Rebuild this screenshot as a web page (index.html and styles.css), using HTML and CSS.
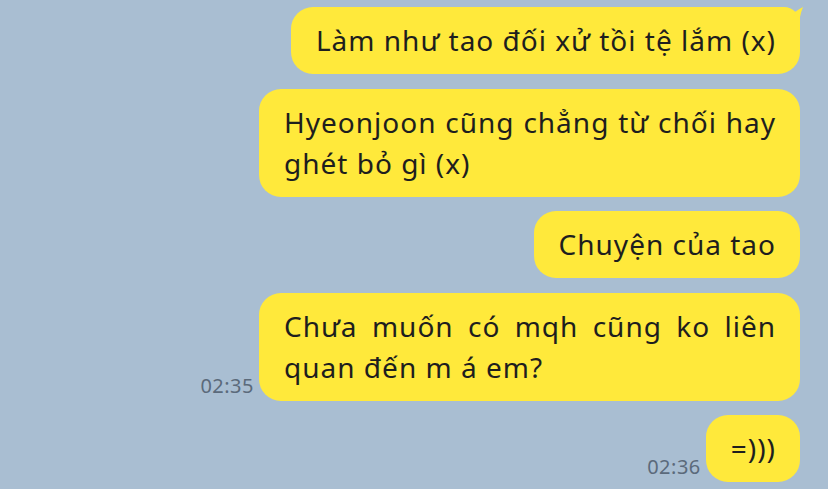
FILE: index.html
```html
<!DOCTYPE html>
<html lang="vi">
<head>
    <meta charset="UTF-8">
    <title>Chat</title>
    <link rel="stylesheet" href="styles.css">
</head>
<body>
    <div class="chat">
        <div class="row">
            <div class="bubble first">
                Làm như tao đối xử tồi tệ lắm (x)
                <svg class="tail" viewBox="0 0 20 20">
                    <path fill="#ffe93b" d="M11 5 Q15 2 19 0 Q17 5 16 10 L16 16 L8 16 Z"/>
                </svg>
            </div>
        </div>
        <div class="row">
            <div class="bubble wide">Hyeonjoon cũng chẳng từ chối hay ghét bỏ gì (x)</div>
        </div>
        <div class="row">
            <div class="bubble">Chuyện của tao</div>
        </div>
        <div class="row">
            <span class="time">02:35</span>
            <div class="bubble wide">Chưa muốn có mqh cũng ko liên quan đến m á em?</div>
        </div>
        <div class="row">
            <span class="time">02:36</span>
            <div class="bubble">=)))</div>
        </div>
    </div>
</body>
</html>
```

FILE: styles.css
```css
* {
    margin: 0;
    padding: 0;
    box-sizing: border-box;
}

body {
    background: #a9bed2;
    font-family: "Noto Sans", "Liberation Sans", sans-serif;
    width: 828px;
    height: 489px;
    overflow: hidden;
}

.chat {
    display: flex;
    flex-direction: column;
    gap: 14.5px;
    padding: 7px 28px 0 0;
}

.row {
    display: flex;
    justify-content: flex-end;
    align-items: flex-end;
    gap: 5px;
}

.bubble {
    position: relative;
    background: #ffe93b;
    color: #1e1e1e;
    font-size: 28px;
    letter-spacing: 1px;
    line-height: 41px;
    padding: 13px 24px 13px 25px;
    border-radius: 22px;
    max-width: 541px;
}

.bubble.wide {
    width: 541px;
    text-align: justify;
}

.bubble.first {
    border-top-right-radius: 16px;
}

.tail {
    position: absolute;
    top: 0;
    right: -4px;
    width: 20px;
    height: 20px;
}

.time {
    font-size: 20px;
    letter-spacing: 0.5px;
    color: #5b6a7b;
    line-height: 1;
    padding-bottom: 5px;
}
```
